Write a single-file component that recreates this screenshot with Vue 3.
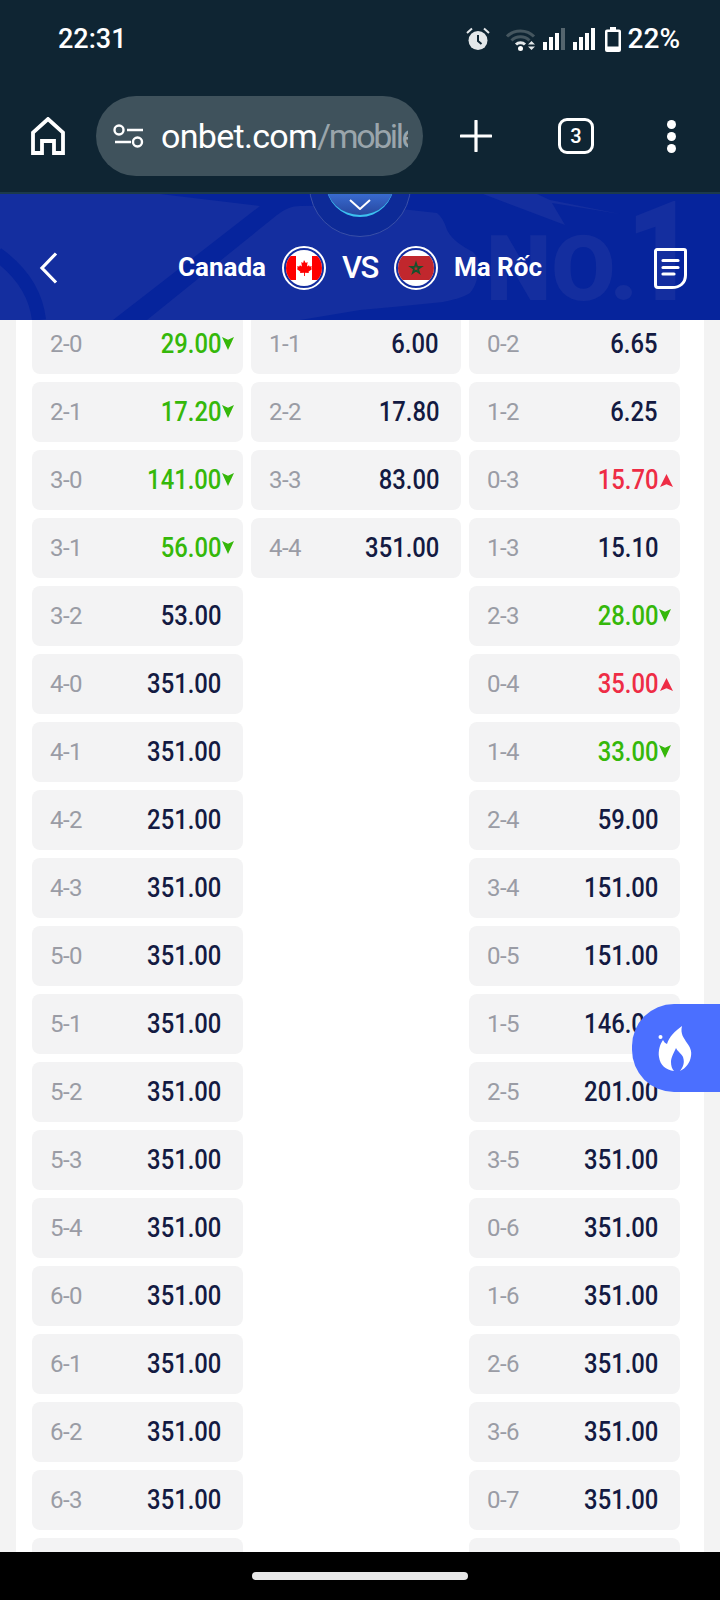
<script setup>
const col1 = [
  ['2-0','29.00','down'],['2-1','17.20','down'],['3-0','141.00','down'],['3-1','56.00','down'],['3-2','53.00'],
  ['4-0','351.00'],['4-1','351.00'],['4-2','251.00'],['4-3','351.00'],['5-0','351.00'],['5-1','351.00'],['5-2','351.00'],
  ['5-3','351.00'],['5-4','351.00'],['6-0','351.00'],['6-1','351.00'],['6-2','351.00'],['6-3','351.00'],['','']
]
const col2 = [['1-1','6.00'],['2-2','17.80'],['3-3','83.00'],['4-4','351.00']]
const col3 = [
  ['0-2','6.65'],['1-2','6.25'],['0-3','15.70','up'],['1-3','15.10'],['2-3','28.00','down'],['0-4','35.00','up'],['1-4','33.00','down'],
  ['2-4','59.00'],['3-4','151.00'],['0-5','151.00'],['1-5','146.00'],['2-5','201.00'],['3-5','351.00'],['0-6','351.00'],['1-6','351.00'],
  ['2-6','351.00'],['3-6','351.00'],['0-7','351.00'],['','']
]
const columns = [col1, col2, col3]
</script>

<template>
  <div class="phone">
    <div class="chrome">
      <div class="status">
        <span class="time">22:31</span>
        <div class="status-right">
          <svg class="alarm" width="24" height="24" viewBox="0 0 24 24">
            <circle cx="12" cy="13.5" r="9.5" fill="#e3e7e9"/>
            <path d="M12 8v6l3.5 3" fill="none" stroke="#0f2533" stroke-width="2"/>
            <path d="M1 6l5-4.5M23 6l-5-4.5" stroke="#e3e7e9" stroke-width="2" fill="none"/>
          </svg>
          <svg class="wifi" width="31" height="24" viewBox="0 0 31 24">
            <path d="M1 9.500C8 2 21 2 28 9.500" fill="none" stroke="#45565f" stroke-width="3"/>
            <path d="M5.500 13.500C10.500 8.500 18.500 8.500 23.500 13.500" fill="none" stroke="#45565f" stroke-width="3"/>
            <path d="M10 17.500C12.500 15 16.500 15 19 17.500" fill="none" stroke="#e3e7e9" stroke-width="3"/>
            <circle cx="14.500" cy="21.500" r="2.500" fill="#fff"/>
            <path d="M22 17.500l3.500-3.500 3.500 3.500zM22 19.500h7l-3.500 3.500z" fill="#e3e7e9"/>
          </svg>
          <svg class="sig" width="23" height="22" viewBox="0 0 23 22">
            <rect x="0" y="14" width="4" height="8" fill="#fff"/>
            <rect x="6" y="9" width="4" height="13" fill="#fff"/>
            <rect x="12" y="5" width="4" height="17" fill="#fff"/>
            <rect x="18" y="0" width="4" height="22" fill="#55656e"/>
          </svg>
          <svg class="sig sig2" width="23" height="22" viewBox="0 0 23 22">
            <rect x="0" y="14" width="4" height="8" fill="#fff"/>
            <rect x="6" y="9" width="4" height="13" fill="#fff"/>
            <rect x="12" y="5" width="4" height="17" fill="#fff"/>
            <rect x="18" y="0" width="4" height="22" fill="#fff"/>
          </svg>
          <svg class="batt" width="16" height="25" viewBox="0 0 16 25">
            <path d="M5 0h6v2.500h3a2 2 0 0 1 2 2V23a2 2 0 0 1-2 2H2a2 2 0 0 1-2-2V4.500a2 2 0 0 1 2-2h3z" fill="#fff"/>
            <rect x="2.500" y="5" width="11" height="14.500" fill="#0f2533"/>
          </svg>
          <span class="pct">22%</span>
        </div>
      </div>
      <div class="toolbar">
        <svg class="home" width="34" height="38" viewBox="0 0 34 38">
          <path d="M2 36V15.500L17 2l15 13.500V36H23V24H11v12z" fill="none" stroke="#fff" stroke-width="3.800" stroke-linejoin="miter"/>
        </svg>
        <div class="pill">
          <svg class="tune" width="32" height="24" viewBox="0 0 32 24">
            <circle cx="6" cy="6" r="4.500" fill="none" stroke="#fff" stroke-width="2.400"/>
            <path d="M14 6h16M2 18h16" stroke="#fff" stroke-width="2.400"/>
            <circle cx="24.500" cy="18" r="4.500" fill="none" stroke="#fff" stroke-width="2.400"/>
          </svg>
          <div class="url"><span class="host">onbet.com</span><span class="path">/mobile</span></div>
        </div>
        <svg class="plus" width="32" height="32" viewBox="0 0 32 32">
          <path d="M16 1v30M1 16h30" stroke="#fff" stroke-width="3.200" stroke-linecap="round"/>
        </svg>
        <div class="tabs">3</div>
        <div class="dots"><i></i><i></i><i></i></div>
      </div>
    </div>

    <header class="match">
      <svg class="decor" width="720" height="126" viewBox="0 0 720 126" aria-hidden="true">
        <path d="M0 0H160L260 12 113 126H0z" fill="#142e9f"/>
        <path d="M-3 60C22 78 36 100 39 126" fill="none" stroke="#06249c" stroke-width="14"/>
        <path d="M147 126L277 21C285 15 292 12 300 12L360 11 410 16 437 19C443 24 445 30 447 36C452 46 462 52 473 58C478 63 479 68 478 73C478 84 476 92 470 99C462 104 452 106 443 108L393 113 360 116 300 126z" fill="#142e9f"/>
        <path d="M483 0L565 31 552 9 620 20 550 6 537 0z" fill="#142e9f"/>
        <text class="no" x="486" y="106" font-size="91" textLength="152" lengthAdjust="spacingAndGlyphs">NO.</text>
        <text class="no" x="626" y="106" font-size="140" textLength="70" lengthAdjust="spacingAndGlyphs">1</text>
      </svg>
      <div class="ring"></div>
      <div class="tab-down">
        <svg width="22" height="11" viewBox="0 0 22 11"><path d="M1 1l10 9L21 1" fill="none" stroke="#fff" stroke-width="2"/></svg>
      </div>
      <svg class="back" width="19" height="32" viewBox="0 0 19 32"><path d="M17 1.500L3 16l14 14.500" fill="none" stroke="#fff" stroke-width="3.200"/></svg>
      <div class="teams">
        <span class="team">Canada</span>
        <div class="flag-ring">
          <svg width="36" height="36" viewBox="0 0 36 36">
            <rect width="36" height="36" fill="#fff"/>
            <rect y="6" width="10" height="24" fill="#f00"/>
            <rect x="26" y="6" width="10" height="24" fill="#f00"/>
            <path d="M18 10l1.800 3 1.800-.9-.6 4.400 2-1.300.6 1.300 2.200-.3-.6 2 .9.700-3.600 2.900.4 1.300-4-.4V26h-.9v-3.300l-4 .4.400-1.300-3.600-2.900.9-.7-.6-2 2.200.3.600-1.300 2 1.300-.6-4.400 1.800.9z" fill="#f00"/>
          </svg>
        </div>
        <span class="vs">VS</span>
        <div class="flag-ring">
          <svg width="36" height="36" viewBox="0 0 36 36">
            <rect width="36" height="36" fill="#fff"/>
            <rect y="6" width="36" height="24" fill="#c1272d"/>
            <path d="M18 13l1.200 3.800h4l-3.200 2.300 1.200 3.800-3.200-2.300-3.200 2.300 1.200-3.800-3.200-2.300h4z" fill="none" stroke="#17512c" stroke-width="1.700"/>
          </svg>
        </div>
        <span class="team">Ma Rốc</span>
      </div>
      <svg class="doc" width="33" height="41" viewBox="0 0 33 41">
        <path d="M3 1.500H30a1.500 1.500 0 0 1 1.500 1.500V27C31.500 35 26 39.500 18 39.500H4A2.500 2.500 0 0 1 1.500 37V3A1.500 1.500 0 0 1 3 1.500z" fill="none" stroke="#fff" stroke-width="3"/>
        <path d="M9 12.500h15M9 19.500h15M9 26h11" stroke="#fff" stroke-width="3.200" stroke-linecap="round"/>
      </svg>
    </header>

    <main class="content">
      <div class="sheet">
        <div class="grid">
          <div v-for="(col, c) in columns" :key="c" class="col">
            <div v-for="(item, i) in col" :key="i" class="odd">
              <span class="score">{{ item[0] }}</span>
              <span class="price" :class="item[2]">{{ item[1] }}</span>
              <i v-if="item[2]" class="arrow" :class="item[2]"></i>
            </div>
          </div>
        </div>
      </div>
      <div class="fire">
        <svg width="34" height="46" viewBox="0 0 34 46">
          <circle cx="2.500" cy="11" r="2" fill="#fff"/>
          <path d="M24 0C22 8 26 12 29 17C32 21 34 25 33 30C32 37 28 42 22 45C25 41 27 37 25 31C24 28 20 26 18 22C16 27 13 31 13 36C13 40 14 43 16 45C8 44 2 39 1 31C0 25 2 18 5 14C6 16 7 17 9 18C11 11 17 5 24 0z" fill="#fff"/>
        </svg>
      </div>
    </main>

    <footer class="nav"><span class="handle"></span></footer>
  </div>
</template>

<style>
html, body { margin: 0; padding: 0; background: #000; }
</style>

<style scoped>
.phone {
  width: 720px;
  height: 1600px;
  display: flex;
  flex-direction: column;
  overflow: hidden;
  font-family: Roboto, "Liberation Sans", sans-serif;
  background: #f3f3f3;
}
.chrome {
  height: 192px;
  background: #0f2533;
  border-bottom: 2px solid #1c3a4c;
  box-sizing: content-box;
  color: #fff;
  flex: none;
}
.status {
  height: 78px;
  display: flex;
  align-items: center;
  justify-content: space-between;
  padding: 0 40px 0 58px;
  box-sizing: border-box;
}
.time { font-size: 27px; font-weight: 500; line-height: 1; }
.status-right { display: flex; align-items: center; }
.alarm { margin-right: 16px; }
.wifi { margin-right: 6px; }
.sig2 { margin-left: 7px; }
.batt { margin-left: 9px; }
.pct { font-size: 28px; font-weight: 500; margin-left: 7px; line-height: 1; }
.toolbar {
  height: 80px;
  margin-top: 18px;
  display: flex;
  align-items: center;
  padding-left: 31px;
}
.home { flex: none; }
.pill {
  width: 327px;
  height: 80px;
  margin-left: 31px;
  border-radius: 40px;
  background: #3f525c;
  display: flex;
  align-items: center;
  padding-left: 17px;
  box-sizing: border-box;
  flex: none;
}
.tune { flex: none; }
.url {
  margin-left: 16px;
  width: 247px;
  overflow: hidden;
  white-space: nowrap;
  font-size: 34px;
  line-height: 40px;
}
.host { color: #fff; letter-spacing: -0.700px; }
.path { color: #9aa5ab; letter-spacing: -2.400px; }
.plus { margin-left: 37px; flex: none; }
.tabs {
  margin-left: 66px;
  width: 36px;
  height: 36px;
  box-sizing: border-box;
  border: 3px solid #fff;
  border-radius: 9px;
  font-size: 20px;
  font-weight: 500;
  display: flex;
  align-items: center;
  justify-content: center;
  flex: none;
}
.dots {
  margin-left: 73px;
  display: flex;
  flex-direction: column;
  gap: 3px;
}
.dots i { width: 9px; height: 9px; border-radius: 50%; background: #fff; display: block; }

.match {
  height: 126px;
  flex: none;
  position: relative;
  background: #06249c;
  overflow: hidden;
}
.decor { position: absolute; left: 0; top: 0; }
.no {
  fill: #142e9f;
  font-family: Roboto, sans-serif;
  font-weight: 900;
}
.ring {
  position: absolute;
  left: 309px;
  top: -59px;
  width: 102px;
  height: 102px;
  border-radius: 50%;
  border: 1px solid #3a50a8;
  box-sizing: border-box;
  background: #0d2a97;
}
.tab-down {
  position: absolute;
  left: 326px;
  top: -45px;
  width: 68px;
  height: 68px;
  border-radius: 50%;
  box-sizing: border-box;
  background: linear-gradient(#3d74dc 60%, #27479f);
  border-bottom: 2px solid #3cc0f0;
  display: flex;
  align-items: flex-end;
  justify-content: center;
  padding-bottom: 5px;
}
.tab-down svg { display: block; }
.back { position: absolute; left: 39px; top: 58px; }
.teams {
  position: absolute;
  left: 178px;
  top: 52px;
  height: 44px;
  display: flex;
  align-items: center;
  color: #fff;
}
.team { font-size: 26px; font-weight: 700; white-space: nowrap; margin-bottom: 2px; }
.flag-ring {
  width: 44px;
  height: 44px;
  border-radius: 50%;
  border: 2px solid #fff;
  box-sizing: border-box;
  display: flex;
  align-items: center;
  justify-content: center;
  overflow: hidden;
  margin-left: 16px;
  flex: none;
}
.flag-ring svg { border-radius: 50%; display: block; }
.vs { font-size: 31px; font-weight: 500; margin: 0 0 2px 16px; width: 36px; letter-spacing: -1.5px; }
.flag-ring + .team { margin-left: 16px; }
.doc { position: absolute; left: 654px; top: 54px; }

.content {
  flex: 1;
  min-height: 0;
  position: relative;
  overflow: hidden;
}
.sheet {
  margin: -6px 16px 0;
  padding: 0 16px;
  background: #fff;
  height: 1300px;
  box-sizing: border-box;
}
.grid {
  display: grid;
  grid-template-columns: 211px 210px 211px;
  gap: 8px;
  align-items: start;
}
.col { display: flex; flex-direction: column; gap: 8px; }
.odd {
  height: 60px;
  border-radius: 8px;
  background: #f3f3f4;
  position: relative;
  display: flex;
  align-items: center;
  justify-content: space-between;
  padding: 0 22px 0 18px;
  box-sizing: border-box;
}
.score { font-size: 24px; letter-spacing: -0.5px; color: #9a9ca5; }
.price {
  font-size: 28px;
  font-weight: 500;
  line-height: 32px;
  color: #131a42;
  display: inline-block;
  white-space: nowrap;
  transform: scaleX(0.85);
  transform-origin: right center;
}
.price.down { color: #35b80a; }
.price.up { color: #ee2c45; }
.arrow {
  position: absolute;
  right: 9px;
  top: 23px;
  width: 12px;
  height: 13px;
}
.arrow.down {
  background: #35b80a;
  clip-path: polygon(0 0, 50% 22%, 100% 0, 50% 100%);
}
.arrow.up {
  background: #ee2c45;
  top: 24px;
  right: 7px;
  width: 13px;
  clip-path: polygon(50% 0, 100% 100%, 50% 78%, 0 100%);
}
.fire {
  position: absolute;
  right: 0;
  top: 684px;
  width: 88px;
  height: 88px;
  background: #4b6fff;
  border-radius: 42px 0 0 42px;
  display: flex;
  align-items: center;
  padding: 2px 0 0 26px;
  box-sizing: border-box;
}
.nav {
  height: 48px;
  flex: none;
  background: #000;
  display: flex;
  justify-content: center;
  padding-top: 20px;
  box-sizing: border-box;
}
.handle { width: 216px; height: 8px; border-radius: 4px; background: #e8e8e8; display: block; }
</style>
